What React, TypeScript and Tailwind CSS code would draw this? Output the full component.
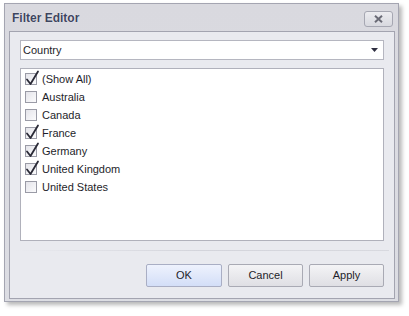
import React from "react";

const items: { label: string; checked: boolean }[] = [
  { label: "(Show All)", checked: true },
  { label: "Australia", checked: false },
  { label: "Canada", checked: false },
  { label: "France", checked: true },
  { label: "Germany", checked: true },
  { label: "United Kingdom", checked: true },
  { label: "United States", checked: false },
];

function CheckBox({ checked }: { checked: boolean }) {
  return (
    <div className="relative w-[12px] h-[12px] shrink-0 border border-[#9a9ba6] bg-gradient-to-br from-[#e4e4ea] to-[#fbfbfc]">
      {checked && (
        <svg
          className="absolute left-[-1px] top-[-4px]"
          width="15"
          height="16"
          viewBox="0 0 15 16"
        >
          <path
            d="M2 9.5 L5.5 14 L13 1.5"
            fill="none"
            stroke="#2a2a36"
            strokeWidth="1.8"
            strokeLinecap="round"
            strokeLinejoin="round"
          />
        </svg>
      )}
    </div>
  );
}

function Btn({ label, primary }: { label: string; primary?: boolean }) {
  return (
    <div
      className={
        "h-[23px] flex items-center justify-center rounded-[2px] border text-[11px] text-[#1e1e2a] " +
        (primary
          ? "w-[76px] border-[#a9aec4] bg-gradient-to-b from-[#eef2fd] to-[#d3def7]"
          : "w-[75px] border-[#a9aab4] bg-gradient-to-b from-[#f4f4f6] to-[#dfdfe4]")
      }
    >
      {label}
    </div>
  );
}

export default function App() {
  return (
    <div
      className="w-[409px] h-[316px] bg-white pt-[3px] pl-[4px]"
      style={{ fontFamily: '"Liberation Sans", Arial, sans-serif' }}
    >
      <div className="w-[395px] h-[299px] border border-[#a4a5b1] bg-gradient-to-b from-[#d9d9df] to-[#dcdde3] flex flex-col shadow-[3px_3px_4px_rgba(0,0,0,0.28)]">
        <div className="h-[27px] flex items-center justify-between pl-[7px] pr-[5px]">
          <span className="text-[12px] font-bold text-[#3e4560] [text-shadow:0_0_1px_rgba(255,255,255,0.9)]">
            Filter Editor
          </span>
          <div className="w-[29px] h-[16px] mt-[2px] rounded-[3px] border border-[#a6a7b2] bg-gradient-to-b from-[#ececf0] to-[#d8d9df] flex items-center justify-center">
            <svg width="9" height="8" viewBox="0 0 9 8">
              <path d="M1 0.8 L8 7.2 M8 0.8 L1 7.2" stroke="#6a6b76" strokeWidth="2" />
            </svg>
          </div>
        </div>
        <div className="ml-[4px] w-[386px] h-[268px] border border-[#a3a4b0] bg-[#e9eaef] flex flex-col px-[10px] pt-[8px]">
          <div className="h-[20px] border border-[#b5b6c0] bg-white flex items-center justify-between pl-[2px] pr-[5px] text-[11px] text-[#1e1e2a]">
            <span>Country</span>
            <svg width="7" height="4" viewBox="0 0 7 4">
              <path d="M0 0 L7 0 L3.5 4 Z" fill="#2e2e40" />
            </svg>
          </div>
          <div className="mt-[8px] h-[173px] border border-[#b0b1bb] bg-white pt-[1px]">
            {items.map((it) => (
              <div key={it.label} className="h-[18px] flex items-center pl-[4px] gap-[5px] text-[11px] text-[#1e1e2a]">
                <CheckBox checked={it.checked} />
                <span>{it.label}</span>
              </div>
            ))}
          </div>
          <div className="mt-[9px] -mx-[5px] h-[1px] bg-gradient-to-r from-[#e9eaef] via-[#d3d4db] to-[#d8d9df]" />
          <div className="mt-[13px] flex justify-end gap-[6px]">
            <Btn label="OK" primary />
            <Btn label="Cancel" />
            <Btn label="Apply" />
          </div>
        </div>
      </div>
    </div>
  );
}
